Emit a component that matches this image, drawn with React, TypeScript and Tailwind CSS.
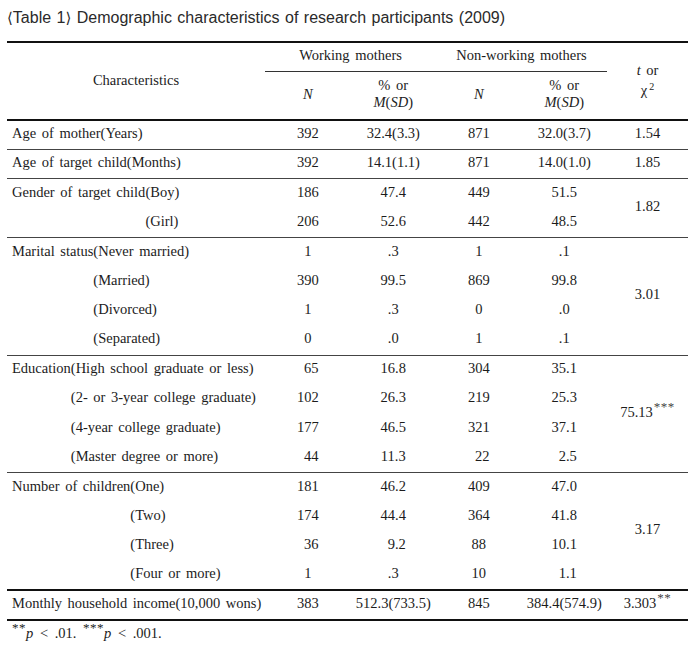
import type { ReactNode } from "react";

type Section = {
  prefix: string;
  rows: string[][];
  t: ReactNode;
  thick?: boolean;
};

const Stars = ({ n }: { n: string }) => (
  <sup className="text-[13px] text-[#444] ml-[1px] -top-[0.45em] tracking-[0.5px]">{n}</sup>
);

const sections: Section[] = [
  { prefix: "Age of mother", rows: [["(Years)", "392", "32.4(3.3)", "871", "32.0(3.7)"]], t: "1.54" },
  { prefix: "Age of target child", rows: [["(Months)", "392", "14.1(1.1)", "871", "14.0(1.0)"]], t: "1.85" },
  {
    prefix: "Gender of target child",
    rows: [
      ["(Boy)", "186", "47.4", "449", "51.5"],
      ["(Girl)", "206", "52.6", "442", "48.5"],
    ],
    t: "1.82",
  },
  {
    prefix: "Marital status",
    rows: [
      ["(Never married)", "1", ".3", "1", ".1"],
      ["(Married)", "390", "99.5", "869", "99.8"],
      ["(Divorced)", "1", ".3", "0", ".0"],
      ["(Separated)", "0", ".0", "1", ".1"],
    ],
    t: "3.01",
  },
  {
    prefix: "Education",
    rows: [
      ["(High school graduate or less)", "_65", "16.8", "304", "35.1"],
      ["(2- or 3-year college graduate)", "102", "26.3", "219", "25.3"],
      ["(4-year college graduate)", "177", "46.5", "321", "37.1"],
      ["(Master degree or more)", "_44", "11.3", "_22", "_2.5"],
    ],
    t: (
      <>
        75.13<Stars n="***" />
      </>
    ),
  },
  {
    prefix: "Number of children",
    rows: [
      ["(One)", "181", "46.2", "409", "47.0"],
      ["(Two)", "174", "44.4", "364", "41.8"],
      ["(Three)", "_36", "_9.2", "88", "10.1"],
      ["(Four or more)", "1", ".3", "10", "_1.1"],
    ],
    t: "3.17",
  },
  {
    prefix: "Monthly household income",
    rows: [["(10,000 wons)", "383", "512.3(733.5)", "845", "384.4(574.9)"]],
    t: (
      <>
        3.303<Stars n="**" />
      </>
    ),
    thick: true,
  },
];

// leading "_" = shift right by half a digit, so the number lines up on the right
const Num = ({ v }: { v: string }) =>
  v.startsWith("_") ? <span className="pl-[7px]">{v.slice(1)}</span> : <>{v}</>;

export default function App() {
  return (
    <div className="w-[700px] h-[645px] bg-white pt-[8px] text-[#1c1c1c]">
      <div className="pl-[7px] h-[20px] leading-[20px] text-[16px] text-[#2a2a2a] font-['Liberation_Sans','DejaVu_Sans',sans-serif] [word-spacing:1px]">
        <span className="font-['DejaVu_Sans'] text-[15px]">⟨</span>Table 1
        <span className="font-['DejaVu_Sans'] text-[15px]">⟩</span> Demographic characteristics of research
        participants (2009)
      </div>

      <table className="ml-[7px] mt-[13px] w-[681px] table-fixed border-collapse font-['Liberation_Serif',serif] text-[14.5px] leading-[17px] [word-spacing:2px]">
        <colgroup>
          <col className="w-[258px]" />
          <col className="w-[85.5px]" />
          <col className="w-[85.5px]" />
          <col className="w-[85.5px]" />
          <col className="w-[85.5px]" />
          <col className="w-[81px]" />
        </colgroup>
        <thead>
          <tr className="h-[29px] border-t-2 border-[#111]">
            <th rowSpan={2} className="font-normal text-center align-middle pb-[2px]">
              Characteristics
            </th>
            <th colSpan={2} className="font-normal text-center border-b border-[#333] pb-[2px]">
              Working mothers
            </th>
            <th colSpan={2} className="font-normal text-center border-b border-[#333] pb-[2px]">
              Non-working mothers
            </th>
            <th rowSpan={2} className="font-normal text-center leading-[20px] pb-[2px]">
              <i>t</i> or
              <br />χ<sup className="text-[10px] ml-[2px]">2</sup>
            </th>
          </tr>
          <tr className="h-[49px] border-b-2 border-[#111]">
            <th className="font-normal italic pb-[2px]">N</th>
            <th className="font-normal pb-[2px]">
              % or
              <br />
              <i>M</i>(<i>SD</i>)
            </th>
            <th className="font-normal italic pb-[2px]">N</th>
            <th className="font-normal pb-[2px]">
              % or
              <br />
              <i>M</i>(<i>SD</i>)
            </th>
          </tr>
        </thead>
        {sections.map((s) => (
          <tbody key={s.prefix} className={s.thick ? "border-y-2 border-[#111]" : "border-t border-[#444]"}>
            {s.rows.map((r, i) => (
              <tr key={r[0]} className="h-[29.4px]">
                <td className="pl-[5px] whitespace-nowrap pb-[3px]">
                  <span className={i === 0 ? "" : "invisible"}>{s.prefix}</span>
                  {r[0]}
                </td>
                {r.slice(1).map((v, j) => (
                  <td key={j} className="text-center pb-[3px]">
                    <Num v={v} />
                  </td>
                ))}
                {i === 0 && (
                  <td rowSpan={s.rows.length} className="text-center pb-[3px]">
                    {s.t}
                  </td>
                )}
              </tr>
            ))}
          </tbody>
        ))}
      </table>

      <div className="pl-[12px] mt-[4px] font-['Liberation_Serif',serif] text-[14.5px] leading-[17px] [word-spacing:3px]">
        <sup className="text-[13px] -top-[0.45em] tracking-[0.5px]">**</sup>
        <i>p</i> &lt; .01. <sup className="text-[13px] -top-[0.45em] tracking-[0.5px]">***</sup>
        <i>p</i> &lt; .001.
      </div>
    </div>
  );
}
